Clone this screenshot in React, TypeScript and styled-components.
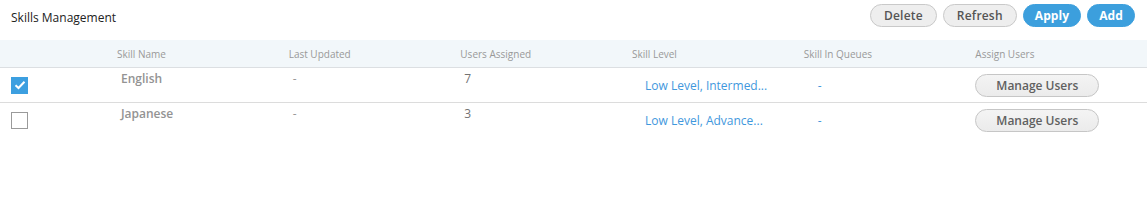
import React from "react";
import styled, { createGlobalStyle, css } from "styled-components";

const Global = createGlobalStyle`
  html, body { margin: 0; padding: 0; background: #fff; }
  body { font-family: "Open Sans", "Liberation Sans", sans-serif; }
  * { box-sizing: border-box; }
`;

const Page = styled.div`
  width: 1147px;
  height: 210px;
  background: #fff;
`;

const TopBar = styled.div`
  height: 40px;
  display: flex;
  align-items: flex-start;
  justify-content: space-between;
  padding: 4px 12px 0 11px;
`;

const Title = styled.div`
  font-size: 12px;
  line-height: 16px;
  color: #222;
  margin-top: 6px;
`;

const Actions = styled.div`
  display: flex;
  gap: 6px;
`;

const PillButton = styled.button<{ $primary?: boolean }>`
  height: 23px;
  border-radius: 12px;
  font-family: inherit;
  font-size: 12px;
  cursor: pointer;
  ${(p) =>
    p.$primary
      ? css`
          background: #3c9fdd;
          border: 1px solid #3c9fdd;
          color: #fff;
          font-weight: 700;
          padding: 0 11px;
          letter-spacing: 0.1px;
        `
      : css`
          background: #eeeeee;
          border: 1px solid #c9c9c9;
          color: #555;
          font-weight: 600;
          padding: 0 13px;
          letter-spacing: 0.2px;
        `}
`;

const Row = styled.div<{ $header?: boolean; $divider?: boolean }>`
  display: grid;
  grid-template-columns: 117px repeat(6, 1fr);
  ${(p) =>
    p.$header
      ? css`
          height: 28px;
          background: #f2f7fa;
          border-bottom: 1px solid #dcdfe2;
          align-items: center;
        `
      : css`
          height: 35px;
          border-bottom: 1px solid ${p.$divider ? "#dcdcdc" : "transparent"};
        `}
`;

const HeadCell = styled.div`
  font-size: 10px;
  color: #999;
  line-height: 14px;
  padding-top: 1px;
  white-space: nowrap;
`;

const TopCell = styled.div<{ $weight?: number; $color?: string }>`
  padding: 3px 0 0 4px;
  font-size: 12px;
  line-height: 16px;
  color: ${(p) => p.$color ?? "#8a8a8a"};
  font-weight: ${(p) => p.$weight ?? 400};
`;

const MidCell = styled.div<{ $indent?: number }>`
  display: flex;
  align-items: center;
  padding-left: ${(p) => p.$indent ?? 0}px;
`;

const LinkText = styled.span`
  font-size: 12px;
  line-height: 16px;
  color: #3f98dd;
  white-space: nowrap;
  margin-top: 2px;
`;

const CheckCell = styled.div`
  display: flex;
  align-items: center;
  padding-left: 11px;
`;

const Box = styled.div<{ $checked?: boolean }>`
  width: 17px;
  height: 17px;
  display: flex;
  align-items: center;
  justify-content: center;
  ${(p) =>
    p.$checked
      ? css`
          background: #3c9fe0;
        `
      : css`
          border: 1px solid #9a9a9a;
          background: #fff;
        `}
`;

const ManageButton = styled.button`
  width: 124px;
  height: 23px;
  border-radius: 12px;
  border: 1px solid #c6c6c6;
  background: linear-gradient(#f4f4f4, #ebebeb);
  font-family: inherit;
  font-size: 12px;
  font-weight: 600;
  color: #606060;
  padding: 0;
  margin-top: 1px;
`;

type Skill = {
  name: string;
  updated: string;
  users: string;
  level: string;
  queues: string;
  checked: boolean;
};

const skills: Skill[] = [
  { name: "English", updated: "-", users: "7", level: "Low Level, Intermed...", queues: "-", checked: true },
  { name: "Japanese", updated: "-", users: "3", level: "Low Level, Advance...", queues: "-", checked: false },
];

const Check = () => (
  <svg width="12" height="10" viewBox="0 0 12 10">
    <path d="M1.5 5.2 L4.5 8 L10.5 1.8" fill="none" stroke="#fff" strokeWidth="2" />
  </svg>
);

export default function App() {
  return (
    <Page>
      <Global />
      <TopBar>
        <Title>Skills Management</Title>
        <Actions>
          <PillButton>Delete</PillButton>
          <PillButton>Refresh</PillButton>
          <PillButton $primary>Apply</PillButton>
          <PillButton $primary>Add</PillButton>
        </Actions>
      </TopBar>
      <Row $header>
        <div />
        <HeadCell>Skill Name</HeadCell>
        <HeadCell>Last Updated</HeadCell>
        <HeadCell>Users Assigned</HeadCell>
        <HeadCell>Skill Level</HeadCell>
        <HeadCell>Skill In Queues</HeadCell>
        <HeadCell>Assign Users</HeadCell>
      </Row>
      {skills.map((s, i) => (
        <Row key={s.name} $divider={i < skills.length - 1}>
          <CheckCell>
            <Box $checked={s.checked}>{s.checked && <Check />}</Box>
          </CheckCell>
          <TopCell $weight={600} $color="#939393">{s.name}</TopCell>
          <TopCell $color="#999">{s.updated}</TopCell>
          <TopCell $color="#737373">{s.users}</TopCell>
          <MidCell $indent={13}>
            <LinkText>{s.level}</LinkText>
          </MidCell>
          <MidCell $indent={14}>
            <LinkText>{s.queues}</LinkText>
          </MidCell>
          <MidCell>
            <ManageButton>Manage Users</ManageButton>
          </MidCell>
        </Row>
      ))}
    </Page>
  );
}
